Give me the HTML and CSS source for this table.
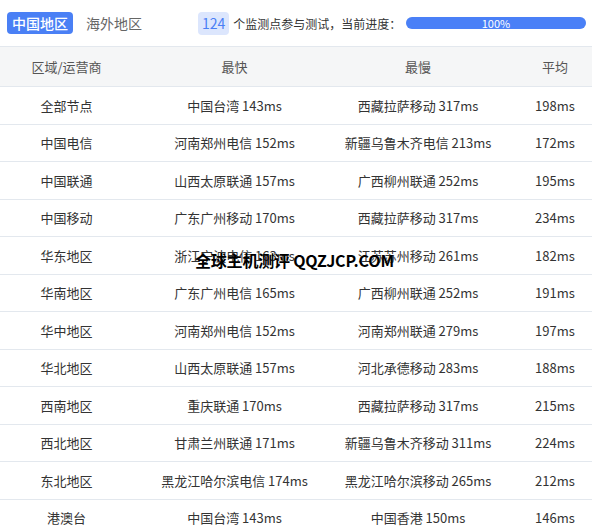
FILE: index.html
```html
<!DOCTYPE html>
<html lang="zh">
<head>
<meta charset="utf-8">
<link rel="stylesheet" href="styles.css">
</head>
<body>
<div class="page">
  <div class="topbar">
    <span class="tab tab-active">中国地区</span>
    <span class="tab">海外地区</span>
    <span class="badge">124</span>
    <span class="info">个监测点参与测试，当前进度：</span>
    <div class="progress"><div class="progress-fill" style="width:100%">100%</div></div>
  </div>
  <div class="table">
    <div class="row head"><div>区域/运营商</div><div>最快</div><div>最慢</div><div class="c4">平均</div></div>
    <div class="row"><div>全部节点</div><div>中国台湾 143ms</div><div>西藏拉萨移动 317ms</div><div class="c4">198ms</div></div>
    <div class="row"><div>中国电信</div><div>河南郑州电信 152ms</div><div>新疆乌鲁木齐电信 213ms</div><div class="c4">172ms</div></div>
    <div class="row"><div>中国联通</div><div>山西太原联通 157ms</div><div>广西柳州联通 252ms</div><div class="c4">195ms</div></div>
    <div class="row"><div>中国移动</div><div>广东广州移动 170ms</div><div>西藏拉萨移动 317ms</div><div class="c4">234ms</div></div>
    <div class="row"><div>华东地区</div><div>浙江宁波电信 163ms</div><div>江苏苏州移动 261ms</div><div class="c4">182ms</div></div>
    <div class="row"><div>华南地区</div><div>广东广州电信 165ms</div><div>广西柳州联通 252ms</div><div class="c4">191ms</div></div>
    <div class="row"><div>华中地区</div><div>河南郑州电信 152ms</div><div>河南郑州联通 279ms</div><div class="c4">197ms</div></div>
    <div class="row"><div>华北地区</div><div>山西太原联通 157ms</div><div>河北承德移动 283ms</div><div class="c4">188ms</div></div>
    <div class="row"><div>西南地区</div><div>重庆联通 170ms</div><div>西藏拉萨移动 317ms</div><div class="c4">215ms</div></div>
    <div class="row"><div>西北地区</div><div>甘肃兰州联通 171ms</div><div>新疆乌鲁木齐移动 311ms</div><div class="c4">224ms</div></div>
    <div class="row"><div>东北地区</div><div>黑龙江哈尔滨电信 174ms</div><div>黑龙江哈尔滨移动 265ms</div><div class="c4">212ms</div></div>
    <div class="row"><div>港澳台</div><div>中国台湾 143ms</div><div>中国香港 150ms</div><div class="c4">146ms</div></div>
  </div>
  <div class="watermark">全球主机测评 QQZJCP.COM</div>
</div>
</body>
</html>
```
FILE: styles.css
```css
html, body {
  margin: 0;
  padding: 0;
  background: #fff;
}
body {
  font-family: "Noto Sans CJK SC", "Noto Sans", sans-serif;
  color: #333;
  overflow: hidden;
}
.page {
  position: relative;
  width: 592px;
}
.topbar {
  height: 46px;
  display: flex;
  align-items: center;
  padding: 0 6px 0 7px;
  box-sizing: border-box;
  font-size: 14px;
  white-space: nowrap;
}
.topbar > * {
  flex-shrink: 0;
}
.tab {
  height: 22px;
  line-height: 22px;
  padding: 0 5px;
  border-radius: 4px;
  color: #666;
}
.tab-active {
  background: #4a80f5;
  color: #fff;
  font-weight: 500;
  margin-right: 8px;
}
.badge {
  margin-left: 51px;
  height: 23px;
  line-height: 23px;
  padding: 0 4px;
  background: #dce6fd;
  color: #4a7ff5;
  border-radius: 4px;
}
.info {
  font-size: 12px;
  margin-left: 4px;
  color: #333;
}
.progress {
  margin-left: auto;
  width: 180px;
  height: 12px;
  border-radius: 6px;
  background: #e6ebf5;
}
.progress-fill {
  height: 12px;
  display: flex;
  align-items: center;
  justify-content: center;
  background: #4a80f7;
  color: #fff;
  font-size: 11px;
  line-height: 1;
  border-radius: 6px;
}
.table {
  border-top: 1px solid #e3e8ee;
  font-size: 13px;
}
.row {
  display: grid;
  grid-template-columns: 133px 203px 164px 1fr;
  height: 37.5px;
  box-sizing: border-box;
  border-bottom: 1px solid #e3e8ee;
  align-items: center;
  text-align: center;
  color: #333;
  white-space: nowrap;
}
.row.head {
  height: 40px;
  background: #f5f6f7;
  color: #555;
}
.c4 {
  padding-left: 18px;
}
.watermark {
  position: absolute;
  left: 195px;
  top: 248px;
  font-size: 16px;
  font-weight: 700;
  color: #000;
  white-space: nowrap;
  letter-spacing: -0.2px;
}
```
